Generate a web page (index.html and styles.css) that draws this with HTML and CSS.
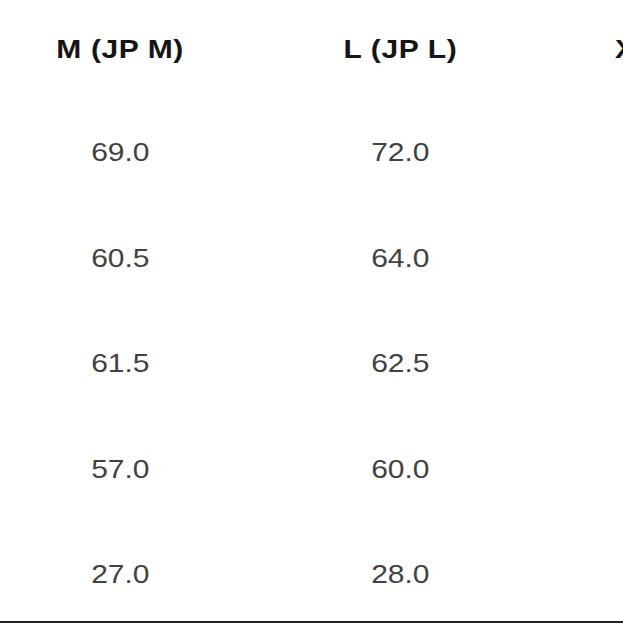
FILE: index.html
```html
<!DOCTYPE html>
<html lang="en">
<head>
<meta charset="utf-8">
<title>Size chart</title>
<link rel="stylesheet" href="styles.css">
</head>
<body>
<div class="page">
  <div class="chart">
    <div class="head"><span class="txt">M (JP M)</span></div>
    <div class="head"><span class="txt">L (JP L)</span></div>
    <div class="head last"><span class="txt">XL (JP XL)</span></div>

    <div class="cell"><span class="txt">69.0</span></div>
    <div class="cell"><span class="txt">72.0</span></div>
    <div class="cell last"><span class="txt">75.0</span></div>

    <div class="cell"><span class="txt">60.5</span></div>
    <div class="cell"><span class="txt">64.0</span></div>
    <div class="cell last"><span class="txt">67.0</span></div>

    <div class="cell"><span class="txt">61.5</span></div>
    <div class="cell"><span class="txt">62.5</span></div>
    <div class="cell last"><span class="txt">64.0</span></div>

    <div class="cell"><span class="txt">57.0</span></div>
    <div class="cell"><span class="txt">60.0</span></div>
    <div class="cell last"><span class="txt">63.0</span></div>

    <div class="cell"><span class="txt">27.0</span></div>
    <div class="cell"><span class="txt">28.0</span></div>
    <div class="cell last"><span class="txt">29.0</span></div>
  </div>
</div>
</body>
</html>
```
FILE: styles.css
```css
html, body {
  margin: 0;
  padding: 0;
  background: #ffffff;
}
body {
  width: 623px;
  height: 623px;
  overflow: hidden;
}
.page {
  width: 623px;
  height: 621px;
  overflow: hidden;
  border-bottom: 2px solid #222222;
  background: #ffffff;
}
.chart {
  display: grid;
  grid-template-columns: 240px 320px 280px;
  grid-template-rows: 96px repeat(5, 105.5px);
  width: 840px;
  font-family: "Liberation Sans", Arial, Helvetica, sans-serif;
}
.head,
.cell {
  display: flex;
  align-items: center;
  justify-content: center;
  white-space: nowrap;
}
.txt {
  display: inline-block;
  transform: scaleX(1.2);
  transform-origin: center center;
}
.head {
  font-size: 25px;
  font-weight: bold;
  letter-spacing: 0.5px;
  color: #151515;
  margin-bottom: -3px;
}
.cell {
  font-size: 25px;
  color: #424242;
  transform: translateY(3.5px);
}
.last {
  padding-right: 14px;
}
```
